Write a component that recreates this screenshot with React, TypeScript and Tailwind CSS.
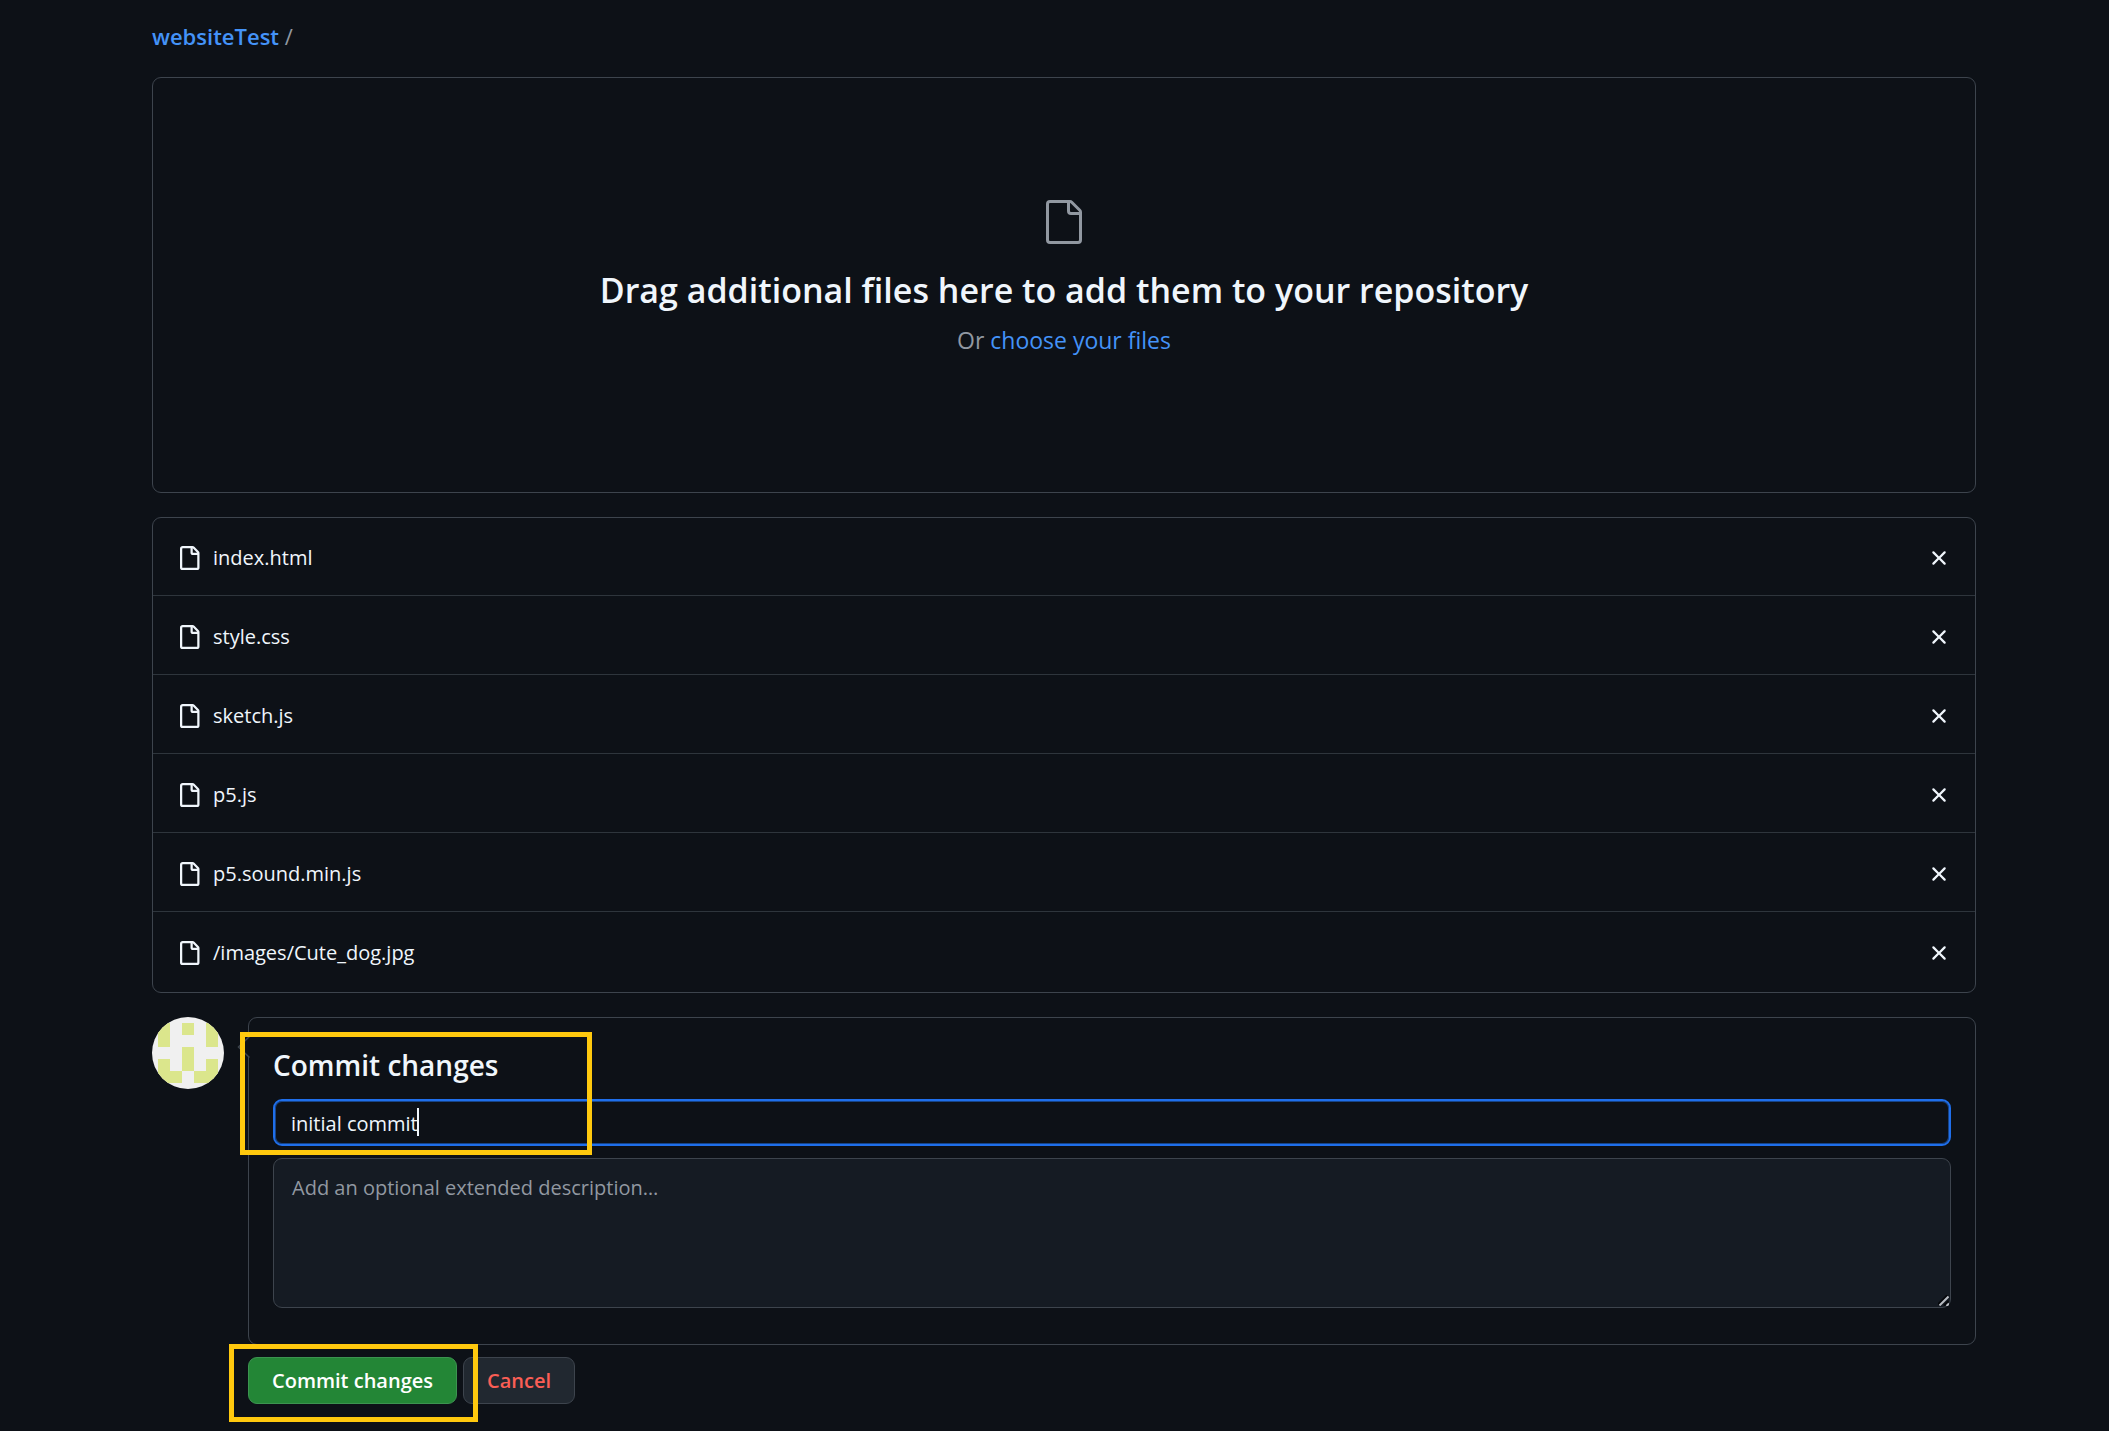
import React, { useState } from 'react';

const INITIAL_FILES = [
  'index.html',
  'style.css',
  'sketch.js',
  'p5.js',
  'p5.sound.min.js',
  '/images/Cute_dog.jpg',
];

// Identicon cells as [column, row] on a 5x5 grid
const AVATAR_CELLS = [
  [0, 0], [2, 0], [4, 0],
  [0, 1], [4, 1],
  [2, 2],
  [0, 3], [2, 3], [4, 3],
  [0, 4], [1, 4], [3, 4], [4, 4],
];

function LargeFileIcon() {
  return (
    <svg width="48" height="48" viewBox="0 0 24 24" fill="currentColor" aria-hidden="true">
      <path d="M3 3a2 2 0 0 1 2-2h9.982a2 2 0 0 1 1.414.586l4.018 4.018A2 2 0 0 1 21 7.018V21a2 2 0 0 1-2 2H5a2 2 0 0 1-2-2Zm2-.5a.5.5 0 0 0-.5.5v18a.5.5 0 0 0 .5.5h14a.5.5 0 0 0 .5-.5V8.5h-4a2 2 0 0 1-2-2v-4Zm10 0v4a.5.5 0 0 0 .5.5h4a.5.5 0 0 0-.146-.336l-4.018-4.018A.5.5 0 0 0 15 2.5Z" />
    </svg>
  );
}

function FileIcon() {
  return (
    <svg width="24" height="24" viewBox="0 0 16 16" fill="currentColor" aria-hidden="true">
      <path d="M2 1.75C2 .784 2.784 0 3.75 0h6.586c.464 0 .909.184 1.237.513l2.914 2.914c.329.328.513.773.513 1.237v9.586A1.75 1.75 0 0 1 13.25 16h-9.5A1.75 1.75 0 0 1 2 14.25Zm1.75-.25a.25.25 0 0 0-.25.25v12.5c0 .138.112.25.25.25h9.5a.25.25 0 0 0 .25-.25V6h-2.75A1.75 1.75 0 0 1 9 4.25V1.5Zm6.75.062V4.25c0 .138.112.25.25.25h2.688l-.011-.013-2.914-2.914-.013-.011Z" />
    </svg>
  );
}

function CloseIcon() {
  return (
    <svg width="24" height="24" viewBox="0 0 16 16" fill="currentColor" aria-hidden="true">
      <path d="M3.72 3.72a.75.75 0 0 1 1.06 0L8 6.94l3.22-3.22a.749.749 0 0 1 1.275.326.749.749 0 0 1-.215.734L9.06 8l3.22 3.22a.749.749 0 0 1-.326 1.275.749.749 0 0 1-.734-.215L8 9.06l-3.22 3.22a.751.751 0 0 1-1.042-.018.751.751 0 0 1-.018-1.042L6.94 8 3.72 4.78a.75.75 0 0 1 0-1.06Z" />
    </svg>
  );
}

function ResizeHandle() {
  return (
    <svg className="pointer-events-none absolute right-0.5 bottom-0.5" width="11" height="11" viewBox="0 0 11 11" aria-hidden="true">
      <path d="M0 9.5 9.5 0M6 10.5 10.5 6" fill="none" stroke="#05070a" strokeWidth="2" />
      <path d="M1.5 10.5 10.5 1.5M8.5 11 11 8.5" fill="none" stroke="#b8bcc2" strokeWidth="2" />
    </svg>
  );
}

function Avatar() {
  return (
    <svg className="shrink-0 rounded-full bg-[#f0f0f0]" width="72" height="72" viewBox="0 0 72 72" aria-hidden="true">
      {AVATAR_CELLS.map(([col, row]) => (
        <rect key={`${col}-${row}`} x={6 + col * 12} y={6 + row * 12} width="12" height="12" fill="#dbe68c" />
      ))}
    </svg>
  );
}

export default function App() {
  const [files, setFiles] = useState(INITIAL_FILES);
  const [summary, setSummary] = useState('initial commit');
  const [description, setDescription] = useState('');

  return (
    <div className="min-h-screen bg-[#0d1117] pl-[152px] pr-[133px] pt-5 pb-[26px] font-['Open_Sans','Noto_Sans',sans-serif] text-[20px] leading-8 text-[#f0f6fc]">
      {/* Breadcrumb */}
      <nav className="mb-6 text-[22px] leading-[33px] text-[#9198a1]">
        <a href="#repo" className="font-semibold text-[#4493f8]">websiteTest</a>
        <span> /</span>
      </nav>

      {/* Drop zone */}
      <section className="flex h-[416px] flex-col items-center rounded-[9px] border border-[#3d444d] pt-[120px]">
        <div className="text-[#9198a1]">
          <LargeFileIcon />
        </div>
        <h1 className="mt-4 text-[34px] font-semibold leading-[56px]">
          Drag additional files here to add them to your repository
        </h1>
        <p className="mt-1 text-[23px] leading-9 text-[#9198a1]">
          Or <a href="#files" className="text-[#4493f8]">choose your files</a>
        </p>
      </section>

      {/* Uploaded files */}
      <ul className="mt-6 rounded-[9px] border border-[#3d444d]">
        {files.map((file) => (
          <li
            key={file}
            className="flex items-center border-t border-[#3d444d]/70 px-6 pt-[25px] pb-[21px] first:border-t-0 first:pt-6 last:pb-[23px]"
          >
            <FileIcon />
            <span className="ml-3 flex-1">{file}</span>
            <button
              type="button"
              aria-label={`Remove ${file}`}
              onClick={() => setFiles(files.filter((f) => f !== file))}
            >
              <CloseIcon />
            </button>
          </li>
        ))}
      </ul>

      {/* Commit form */}
      <form className="mt-6 flex gap-6" onSubmit={(e) => e.preventDefault()}>
        <Avatar />
        <div className="relative min-w-0 flex-1">
          <div className="relative rounded-[9px] border border-[#3d444d] px-6 pt-[25px] pb-9">
            <svg className="absolute -left-3 top-[17px]" width="13" height="24" viewBox="0 0 13 24" aria-hidden="true">
              <path d="M12.5 1.5 1.5 12l11 10.5" fill="#0d1117" stroke="#3d444d" strokeWidth="1.5" />
            </svg>
            <h2 className="mb-[11px] text-[28px] font-semibold leading-[45px]">Commit changes</h2>
            <div className="relative flex">
              <input
                type="text"
                aria-label="Commit message"
                value={summary}
                onChange={(e) => setSummary(e.target.value)}
                className="h-[47px] w-full rounded-[9px] border-2 border-[#1f6feb] bg-[#0d1117] px-4 pt-px caret-transparent shadow-[inset_0_0_0_1px_#174487] outline-none"
              />
              <span className="pointer-events-none absolute left-36 top-[9px] h-7 w-0.5 bg-[#f0f6fc]" />
            </div>
            <div className="relative mt-3">
              <textarea
                aria-label="Extended description"
                placeholder="Add an optional extended description…"
                value={description}
                onChange={(e) => setDescription(e.target.value)}
                className="block h-[150px] w-full resize-none rounded-[9px] border border-[#3d444d] bg-[#151b23] px-[18px] py-[13px] outline-none placeholder:text-[#9198a1]"
              />
              <ResizeHandle />
            </div>
          </div>

          <div className="relative mt-3 flex gap-1.5 font-semibold">
            <button type="submit" className="h-[47px] rounded-[9px] border border-[#3c9450] bg-[#238636] px-[23px] leading-none text-white">
              Commit changes
            </button>
            <button type="button" className="h-[47px] rounded-[9px] border border-[#3d444d] bg-[#212830] px-[23px] leading-none text-[#fa5e55]">
              Cancel
            </button>
            <span className="pointer-events-none absolute -left-[19px] -top-[13px] h-[78px] w-[249px] border-5 border-[#ffc90e]" />
          </div>

          <span className="pointer-events-none absolute -left-2 top-[15px] h-[123px] w-[352px] border-5 border-[#ffc90e]" />
        </div>
      </form>
    </div>
  );
}
